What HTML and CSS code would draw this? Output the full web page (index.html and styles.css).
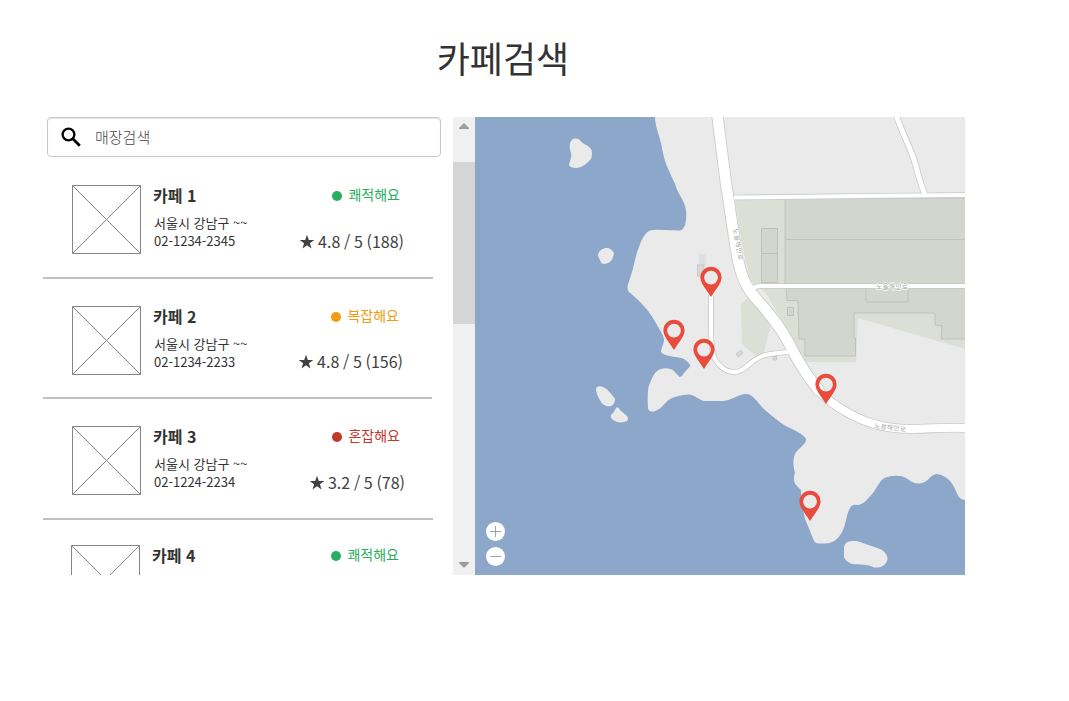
FILE: index.html
```html
<!DOCTYPE html>
<html lang="ko">
<head>
<meta charset="utf-8">
<title>카페검색</title>
<link rel="stylesheet" href="styles.css">
</head>
<body>
<svg class="defs" aria-hidden="true">
  <symbol id="thumb" viewBox="0 0 69 69"><path d="M.5.5h68v68H.5zM.5.5l68 68M68.5.5l-68 68" fill="#fff" stroke="#868686"/></symbol>
  <symbol id="star" viewBox="0 0 16 16"><path d="M8 .8l1.800 5.100h5.500l-4.400 3.300 1.600 5.300L8 11.300l-4.500 3.200 1.600-5.300L.7 5.900h5.500z" fill="#404040"/></symbol>
</svg>
<h1 class="title">카페검색</h1>
<main class="finder">
  <section class="panel">
    <label class="search">
      <svg class="search-icon" viewBox="0 0 20 20"><circle cx="7.500" cy="7.500" r="5.900" fill="none" stroke="#000" stroke-width="2.300"/><path d="M11.800 11.800l7 7" fill="none" stroke="#000" stroke-width="2.700"/></svg>
      <span>매장검색</span>
    </label>
    <article class="card first">
      <svg class="thumb"><use href="#thumb"/></svg>
      <div class="info"><h2>카페 1</h2><p>서울시 강남구 ~~<br>02-1234-2345</p></div>
      <div class="state"><span class="status good">쾌적해요</span><span class="rating"><svg><use href="#star"/></svg>4.8 / 5 (188)</span></div>
    </article>
    <article class="card second">
      <svg class="thumb"><use href="#thumb"/></svg>
      <div class="info"><h2>카페 2</h2><p>서울시 강남구 ~~<br>02-1234-2233</p></div>
      <div class="state"><span class="status busy">복잡해요</span><span class="rating"><svg><use href="#star"/></svg>4.8 / 5 (156)</span></div>
    </article>
    <article class="card third">
      <svg class="thumb"><use href="#thumb"/></svg>
      <div class="info"><h2>카페 3</h2><p>서울시 강남구 ~~<br>02-1224-2234</p></div>
      <div class="state"><span class="status full">혼잡해요</span><span class="rating"><svg><use href="#star"/></svg>3.2 / 5 (78)</span></div>
    </article>
    <article class="card fourth">
      <svg class="thumb"><use href="#thumb"/></svg>
      <div class="info"><h2>카페 4</h2></div>
      <div class="state"><span class="status good">쾌적해요</span></div>
    </article>
  </section>
  <div class="scrollbar">
    <svg class="arrow" viewBox="0 0 10 6"><path d="M5 0l5 5v1H0V5z"/></svg>
    <div class="handle"></div>
    <svg class="arrow down" viewBox="0 0 10 6"><path d="M5 6L0 1V0h10v1z"/></svg>
  </div>
  <svg class="map" viewBox="475 117 490 458">
    <defs>
      <path id="pin" fill="#e94b3c" fill-rule="evenodd" d="M0 0C-3.500-6-10.600-13-10.600-19.700A10.600 10.600 0 0 1 10.600-19.700C10.600-13 3.500-6 0 0zM0-26.300a6.900 6.900 0 1 0 0 13.800a6.900 6.900 0 1 0 0-13.800z"/>
      <g id="roads" fill="none">
        <path class="w4" d="M734 197.500L860 196L965 195"/>
        <path class="w5" d="M896 115C900 127 907 141 912 154S919 182 925 194"/>
        <path class="w4" d="M751 291Q754 286 761 286H966"/>
        <path class="w4" d="M711 295V325C711 343 712 354 715 359Q723 372 733 372C745 373 750 359 765 355Q775 353 790 352"/>
        <path class="w10" d="M717 112C723 165 729 206 735 243C740 276 745 287 759 302C778 323 786 337 795 355C805 373 812 382 820 392"/>
        <path class="w8" d="M818 390C825 398 835 406 850 414C868 424 886 429 911 429C930 429 944 427 966 428"/>
      </g>
    </defs>
    <path class="sea" d="M475 117h490v458H475z"/>
    <g class="land">
      <path d="M655 117C655 125 659 135 661 143C663 154 665 163 669 171L675.500 185C676 190 683 199 685 206C687 213 686.500 219 685 225Q683 230.700 679 230.500L665 230Q653 229 649 231C644 234 641 241 639 247C635 257 634 266 632 272L627.500 286Q627 290 629 292C640 301 650 311 657 325C661 332 664 336 664 340C664 344 661 348 661 352C664 357 676 356 684 359Q690 363 690.300 366C688 369 684 372 682 376L679.500 377L673 370Q667 367 661 369C654 371 652 379 649 385Q647 392 648 408Q649 413 655 411C662 409 664 403 670 399Q678 395 688 394.500C694 394 699 400 704 401H723C733 400 738 394 746 394C754 394 757 403 765 410C775 418 781 424 790 428C798 432 804 435 806 439C807 444 797 449 795 454C792 462 794 469 795 473C793 478 794 483 796 485L801 490V500L805 519C808 526 811 533 814 541Q816 544 820 543.500H825C834 543 838 539 842 532C846 525 846 515 850 508Q852 504 857 505C864 505 868 498 873 493C878 486 880 479 887 477Q894 475 900 476C908 477 911 484 919 483.500C929 483 930 474 937 474C944 475 951 480 954 487C958 495 958 499 965 500V117z"/>
      <path d="M570 143Q573 136 580 140C582 144 587 144 591 149Q593 153 591 159C586 164 583 167 577 168Q570 168 569 165C570 160 572 158 571 153.500Q569 148 570 143z"/>
      <path d="M598 255C599 250 603 248 607 248Q611 248 614 253C613 258 612 263 604 264Q601 264 600 260C599 258 598 257 598 255z"/>
      <path d="M596 389Q597 385 603 387C608 389 613 396 615 399Q615 404 611 406C607 407 603 405 601 402Q596 394 596 389z"/>
      <path d="M616 408Q618 406 620 410L627 416Q629 419 627 421C623 423 618 423 614 420.500Q610 418 611 415Q614 413 616 408z"/>
      <path d="M844 547Q845 541 852 541H857L880 549C885 551 889 557 887 561C885 566 880 568 874 567.500C868 564 860 565 852 564Q845 561 844 557z"/>
    </g>
    <g class="green">
      <path d="M735 198H965V349L858 318L856 362H806L766 293L750 280L741 240z"/>
      <path d="M741 304L752 293L766 307L770 327L764 353L757 357L742 344z"/>
    </g>
    <g class="plot">
      <path d="M785 198H966V284H785z"/>
      <path d="M785 239.500H965" />
      <path d="M761.500 228.500h16v54h-16zM761.500 253.500h16"/>
      <path d="M786 288L787 300.500H798L799 339H805V356H855.500V338H854V313H935V325L942 326L941 339H966V288z"/>
      <path d="M866 287V302H908V287M787.500 307.500h6v8h-6z"/>
    </g>
    <path d="M699 254h7v11h-7z" fill="#e0e0e0"/>
    <g class="hut"><path d="M697.500 265h6.500v11h-6.500z"/><path d="M736 354l5-4 2 3-5 4zM773 356h3.500v4H773z"/></g>
    <use href="#roads" class="casing"/>
    <use href="#roads" class="surface"/>
    <g class="roadname">
      <text x="876" y="288.500">노을해안로</text>
      <text transform="translate(733 229) rotate(80)">노을해안로</text>
      <text transform="translate(874 428) rotate(7)">노을해안로</text>
    </g>
    <use href="#pin" x="711" y="297"/>
    <use href="#pin" x="674" y="350"/>
    <use href="#pin" x="704" y="369"/>
    <use href="#pin" x="826" y="404"/>
    <use href="#pin" x="810" y="521"/>
    <g class="zoom">
      <circle cx="495.500" cy="531.500" r="9.500"/><path d="M490 531.500h11M495.500 526v11"/>
      <circle cx="495.500" cy="556.500" r="9.500"/><path d="M490 556.500h11"/>
    </g>
  </svg>
</main>
</body>
</html>
```

FILE: styles.css
```css
* { box-sizing: border-box; margin: 0; padding: 0; }
body {
  background: #fff;
  color: #333;
  font-family: "Noto Sans CJK KR", sans-serif;
  overflow: hidden;
}
.defs { display: block; width: 0; height: 0; }
.title {
  width: 1006px;
  height: 117px;
  padding-top: 31px;
  text-align: center;
  font-size: 36px;
  font-weight: 400;
  line-height: 53px;
}
.finder { display: flex; height: 458px; margin-left: 43px; }
.panel { width: 410px; overflow: hidden; }
.search {
  display: flex;
  align-items: center;
  gap: 14px;
  width: 394px;
  height: 40px;
  margin-left: 4px;
  padding-left: 13px;
  border: 1px solid #c8c8c8;
  border-radius: 4px;
  box-shadow: inset 0 1px 1px #e4e4e4;
  color: #444;
  font-size: 15px;
  font-weight: 300;
}
.search span { padding-bottom: 2px; }
.search-icon { width: 20px; height: 20px; }
.card {
  display: flex;
  width: 390px;
  padding: 27px 0 0 29px;
  border-bottom: 2px solid #c0c0c0;
}
.first { height: 122px; padding-top: 28px; }
.second { width: 389px; height: 120px; }
.third { height: 121px; }
.fourth { height: 121px; padding: 25px 0 0 28px; }
.thumb { flex: none; width: 69px; height: 69px; }
.info { width: 140px; padding-left: 12px; }
.info h2 { font-size: 16px; font-weight: 700; line-height: 20px; }
.info p { margin: 9px 0 0 1px; font-size: 13px; line-height: 18px; }
.state {
  display: flex;
  flex-direction: column;
  align-items: flex-end;
  width: 123px;
}
.second .state { width: 122px; }
.third .state { width: 124px; }
.status {
  display: flex;
  align-items: center;
  gap: 6px;
  margin-right: 4px;
  font-size: 14px;
  line-height: 18px;
}
.third .status { margin-right: 5px; }
.status::before {
  content: "";
  width: 10px;
  height: 10px;
  margin-top: 4px;
  border-radius: 50%;
  background: currentColor;
}
.good { color: #27ae60; }
.busy { color: #f39c12; }
.full { color: #c0392b; }
.rating {
  display: flex;
  align-items: center;
  gap: 3px;
  margin-top: 27px;
  color: #404040;
  font-size: 16px;
  line-height: 22px;
  word-spacing: -.8px;
}
.second .rating { margin-top: 26px; }
.third .rating { margin-top: 27px; }
.rating svg { width: 16px; height: 16px; margin-top: 2px; }
.scrollbar {
  display: flex;
  flex-direction: column;
  align-items: center;
  width: 22px;
  padding: 6px 0 7px;
  background: #f0f0f0;
}
.arrow { width: 10px; height: 6px; fill: #9c9c9c; }
.handle { width: 22px; height: 162px; margin-top: 33px; background: #d5d5d5; }
.down { margin-top: auto; }
.map { width: 490px; height: 458px; }
.sea { fill: #8da7cb; }
.land { fill: #eaeaea; }
.green { fill: #dcdfd6; }
.plot { fill: #d3d6ce; stroke: #bfc2bb; stroke-width: 1; }
.hut { fill: #d8d8d8; stroke: #c3c3c3; stroke-width: .8; }
.casing { stroke: #c9c9c7; --edge: 1.6px; }
.surface { stroke: #fff; --edge: 0px; }
.w4 { stroke-width: calc(4px + var(--edge)); }
.w5 { stroke-width: calc(5px + var(--edge)); }
.w8 { stroke-width: calc(8px + var(--edge)); }
.w10 { stroke-width: calc(10.5px + var(--edge)); }
.roadname {
  fill: #a5a5a5;
  stroke: #fff;
  stroke-width: 1px;
  paint-order: stroke;
  font-size: 6.5px;
  letter-spacing: .5px;
}
.zoom { fill: #fff; stroke: #8da7cb; stroke-width: 1; }
.zoom circle { stroke: none; }
```
